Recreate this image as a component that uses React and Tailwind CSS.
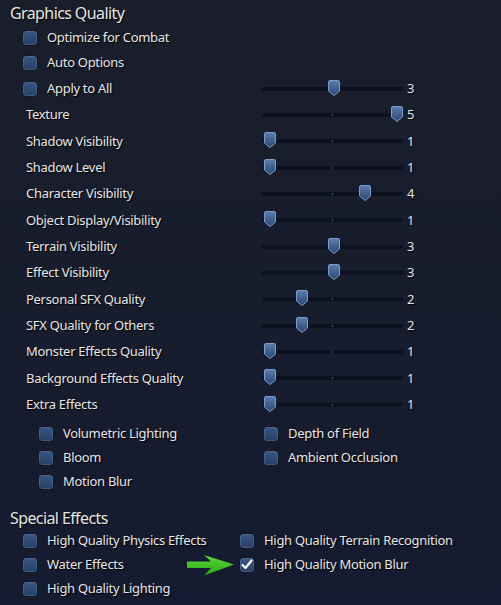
import React from 'react';

const txt = 'text-[#e6e6e6] text-[13px] tracking-[-0.3px] [text-shadow:1px_1px_1px_#000]';
const head = 'text-[#e6e6e6] text-[16px] tracking-[-0.6px] [text-shadow:1px_1px_1px_#000]';

function Box({ checked }) {
  return (
    <span className="w-[16px] h-[16px] shrink-0 rounded-[4px] border border-[#101829] bg-gradient-to-b from-[#3a5681] to-[#2a4064] shadow-[inset_0_0_0_1px_rgba(110,145,200,0.3)] flex items-center justify-center">
      {checked && (
        <svg width="12" height="11" viewBox="0 0 12 11">
          <path d="M1.5 6 L4.5 9 L10.5 1.5" fill="none" stroke="#f4f6fa" strokeWidth="2.2" strokeLinecap="round" strokeLinejoin="round" />
        </svg>
      )}
    </span>
  );
}

function Check({ label, checked, pl, gap }) {
  return (
    <div className={`flex items-center ${pl} ${gap}`}>
      <Box checked={checked} />
      <span className={txt}>{label}</span>
    </div>
  );
}

function Thumb({ value }) {
  return (
    <svg
      className="absolute top-[-7px]"
      style={{ left: 2 + (value - 1) * 31.75 }}
      width="12"
      height="16"
      viewBox="0 0 12 16"
    >
      <defs>
        <linearGradient id="tg" x1="0" y1="0" x2="0" y2="1">
          <stop offset="0" stopColor="#5a7cae" />
          <stop offset="1" stopColor="#2c4772" />
        </linearGradient>
      </defs>
      <path d="M2 0.5 H10 Q11.5 0.5 11.5 2 V11 L6 15.5 L0.5 11 V2 Q0.5 0.5 2 0.5 Z" fill="url(#tg)" stroke="#7b9ccc" strokeWidth="1" />
    </svg>
  );
}

function Slider({ value }) {
  return (
    <div className="relative w-[141px] h-[4px] rounded-full bg-[#0d1220]">
      <div className="absolute left-[70px] top-[1px] w-px h-[2px] bg-[#4b5368]" />
      <Thumb value={value} />
    </div>
  );
}

function SliderRow({ label, value }) {
  return (
    <div className="h-[26.33px] flex items-center">
      <span className={`${txt} w-[262px] pl-[26px]`}>{label}</span>
      <Slider value={value} />
      <span className={`${txt} ml-[4px]`}>{value}</span>
    </div>
  );
}

const sliders = [
  ['Texture', 5],
  ['Shadow Visibility', 1],
  ['Shadow Level', 1],
  ['Character Visibility', 4],
  ['Object Display/Visibility', 1],
  ['Terrain Visibility', 3],
  ['Effect Visibility', 3],
  ['Personal SFX Quality', 2],
  ['SFX Quality for Others', 2],
  ['Monster Effects Quality', 1],
  ['Background Effects Quality', 1],
  ['Extra Effects', 1],
];

export default function App() {
  return (
    <div className="relative w-[501px] h-[605px] overflow-hidden bg-gradient-to-b from-[#1a1e2b] to-[#151b30] font-['Noto_Sans',sans-serif]">
      <div className={`h-[25px] flex items-center pl-[10px] ${head}`}>Graphics Quality</div>
      <div className="h-[25px] flex items-center">
        <Check label="Optimize for Combat" pl="pl-[22px]" gap="gap-[9px]" />
      </div>
      <div className="h-[25px] flex items-center">
        <Check label="Auto Options" pl="pl-[22px]" gap="gap-[9px]" />
      </div>
      <div className="h-[27px] flex items-center">
        <div className="w-[262px]">
          <Check label="Apply to All" pl="pl-[22px]" gap="gap-[9px]" />
        </div>
        <Slider value={3} />
        <span className={`${txt} ml-[4px]`}>3</span>
      </div>
      {sliders.map(([l, v]) => (
        <SliderRow key={l} label={l} value={v} />
      ))}
      <div className="mt-[4px] grid grid-cols-[263px_1fr]">
        <div className="flex flex-col">
          <div className="h-[24px] flex items-center"><Check label="Volumetric Lighting" pl="pl-[38px]" gap="gap-[9px]" /></div>
          <div className="h-[24px] flex items-center"><Check label="Bloom" pl="pl-[38px]" gap="gap-[9px]" /></div>
          <div className="h-[24px] flex items-center"><Check label="Motion Blur" pl="pl-[38px]" gap="gap-[9px]" /></div>
        </div>
        <div className="flex flex-col">
          <div className="h-[24px] flex items-center"><Check label="Depth of Field" pl="pl-0" gap="gap-[9px]" /></div>
          <div className="h-[24px] flex items-center"><Check label="Ambient Occlusion" pl="pl-0" gap="gap-[9px]" /></div>
        </div>
      </div>
      <div className={`mt-[13px] h-[22px] flex items-center pl-[10px] ${head}`}>Special Effects</div>
      <div className="grid grid-cols-[239px_1fr]">
        <div className="flex flex-col">
          <div className="h-[24px] flex items-center"><Check label="High Quality Physics Effects" pl="pl-[22px]" gap="gap-[9px]" /></div>
          <div className="h-[24px] flex items-center"><Check label="Water Effects" pl="pl-[22px]" gap="gap-[9px]" /></div>
          <div className="h-[24px] flex items-center"><Check label="High Quality Lighting" pl="pl-[22px]" gap="gap-[9px]" /></div>
        </div>
        <div className="flex flex-col">
          <div className="h-[24px] flex items-center"><Check label="High Quality Terrain Recognition" pl="pl-0" gap="gap-[9px]" /></div>
          <div className="h-[24px] flex items-center"><Check label="High Quality Motion Blur" checked pl="pl-0" gap="gap-[9px]" /></div>
        </div>
      </div>
      <svg className="absolute left-[186px] top-[554px]" width="50" height="23" viewBox="0 0 50 23">
        <defs>
          <linearGradient id="ag" x1="0" y1="0" x2="0" y2="1">
            <stop offset="0" stopColor="#5fd83c" />
            <stop offset="1" stopColor="#27a814" />
          </linearGradient>
        </defs>
        <path d="M1 7.5 H25 L18 1 L48 10.5 L18 21.5 L25 14 H1 Z" fill="url(#ag)" />
      </svg>
    </div>
  );
}
